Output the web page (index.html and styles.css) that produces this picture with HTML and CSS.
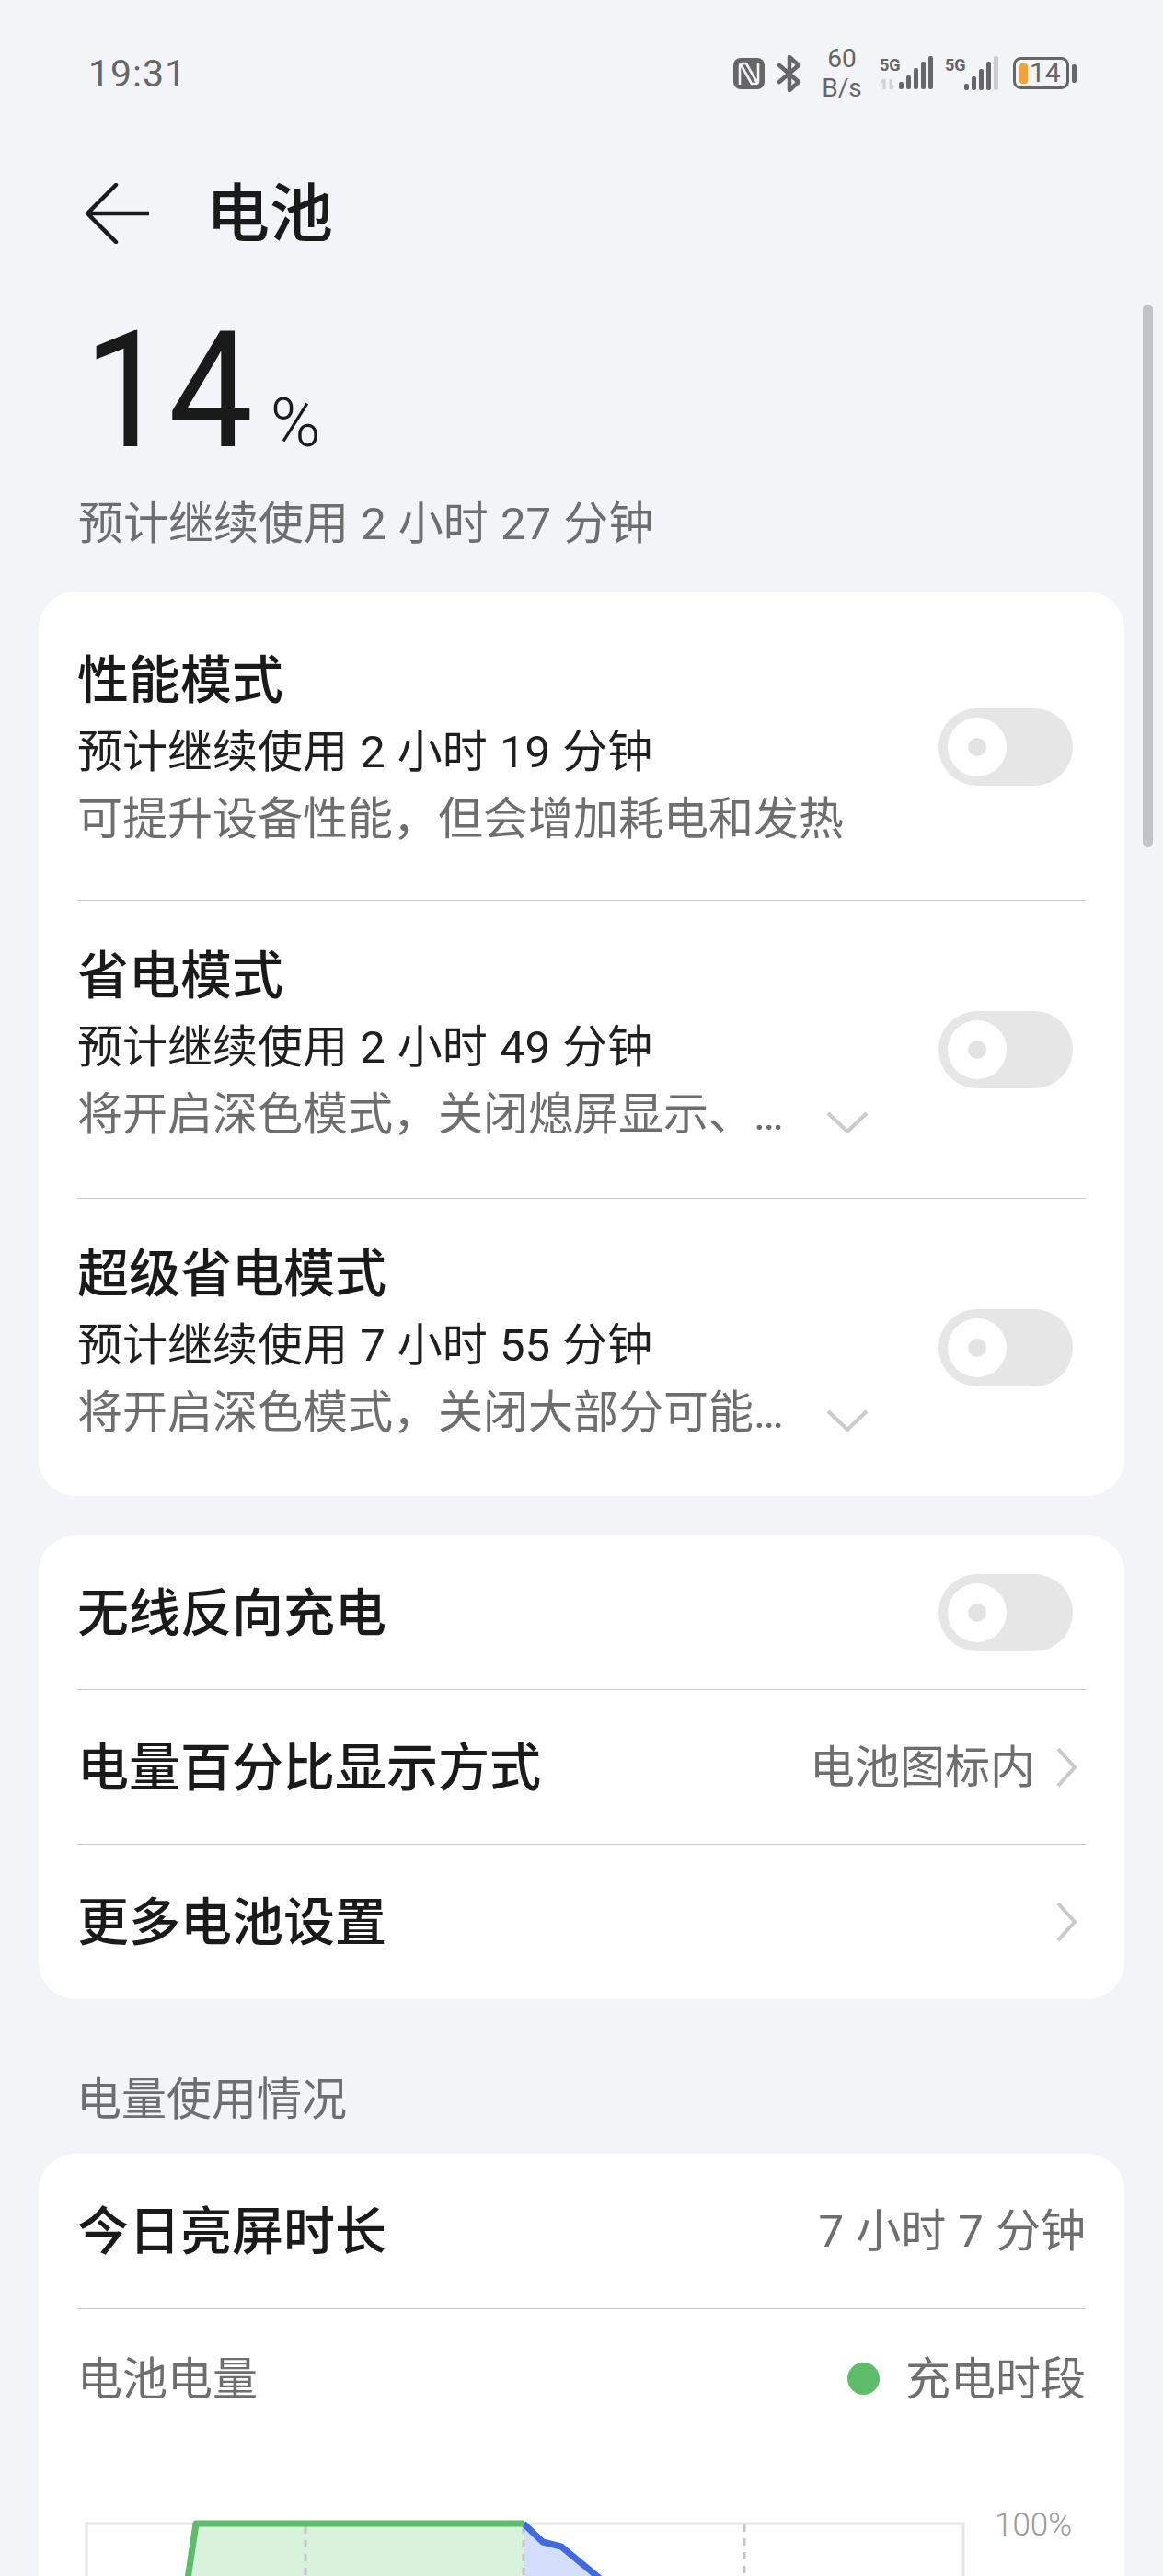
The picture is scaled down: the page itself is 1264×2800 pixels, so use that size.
FILE: index.html
```html
<!DOCTYPE html>
<html lang="zh-CN">
<head>
<meta charset="utf-8">
<title>电池</title>
<link rel="stylesheet" href="styles.css">
</head>
<body>
<div class="page">
  <div class="scrollbar"></div>

  <header class="status">
    <span class="clock">19:31</span>
    <div class="status-icons">
      <svg class="nfc" width="34" height="34" viewBox="0 0 34 34"><rect x="0" y="0" width="34" height="34" rx="8" fill="#666"/><path d="M7 29V9q0-3 3-3h4l12 21M27 5v20q0 3-3 3h-4L8 7" fill="none" stroke="#f2f4f8" stroke-width="2.6" stroke-linejoin="round"/></svg>
      <svg class="bt" width="27" height="40" viewBox="0 0 27 40"><path d="M3 11l21 18-10 9V2l10 9L3 29" fill="none" stroke="#666" stroke-width="4.5" stroke-linejoin="round" stroke-linecap="round"/></svg>
      <div class="speed"><span>60</span><span>B/s</span></div>
      <svg class="sig" width="60" height="40" viewBox="0 0 60 40">
        <text x="0" y="17" class="fiveg">5G</text>
        <path d="M5 37V26M5 26l-3 4M12 26v11M12 37l3-4" fill="none" stroke="#d2d2d2" stroke-width="3"/>
        <rect x="21" y="29" width="5" height="8" rx="2" fill="#666"/>
        <rect x="29" y="22" width="5" height="15" rx="2" fill="#666"/>
        <rect x="37" y="14" width="5" height="23" rx="2" fill="#666"/>
        <rect x="45" y="7" width="5" height="30" rx="2" fill="#666"/>
        <rect x="53" y="1" width="5" height="36" rx="2" fill="#666"/>
      </svg>
      <svg class="sig" width="60" height="40" viewBox="0 0 60 40">
        <text x="0" y="17" class="fiveg">5G</text>
        <rect x="21" y="31" width="5" height="7" rx="2" fill="#666"/>
        <rect x="29" y="23" width="5" height="15" rx="2" fill="#666"/>
        <rect x="37" y="15" width="5" height="23" rx="2" fill="#666"/>
        <rect x="45" y="7" width="5" height="31" rx="2" fill="#666"/>
        <rect x="53" y="1" width="5" height="37" rx="2" fill="#ccc"/>
      </svg>
      <svg class="batt" width="70" height="36" viewBox="0 0 70 36">
        <rect x="1.5" y="1.5" width="58" height="32" rx="7" fill="none" stroke="#666" stroke-width="3"/>
        <rect x="7" y="7" width="9" height="22" rx="3" fill="#f0a33a"/>
        <text x="18" y="27" class="batt-num">14</text>
        <rect x="64" y="8" width="5" height="20" rx="2" fill="#666"/>
      </svg>
    </div>
  </header>

  <nav class="nav">
    <svg class="back" width="70" height="66" viewBox="0 0 70 66"><path d="M34 2L3 33l31 31M3 33h66" fill="none" stroke="#1a1a1a" stroke-width="4.5" stroke-linecap="round" stroke-linejoin="round"/></svg>
    <h1 class="nav-title">电池</h1>
  </nav>

  <section class="summary">
    <div class="level"><span class="level-num">14</span><span class="level-unit">%</span></div>
    <p class="estimate">预计继续使用 2 小时 27 分钟</p>
  </section>

  <section class="card modes">
    <div class="mode mode-first">
      <div class="mode-text">
        <div class="title">性能模式</div>
        <div class="sub">预计继续使用 2 小时 19 分钟</div>
        <div class="desc"><span>可提升设备性能，但会增加耗电和发热</span></div>
      </div>
      <div class="toggle"><i class="knob"></i></div>
    </div>
    <div class="mode">
      <div class="mode-text">
        <div class="title">省电模式</div>
        <div class="sub">预计继续使用 2 小时 49 分钟</div>
        <div class="desc"><span>将开启深色模式，关闭熄屏显示、…</span>
          <svg class="chev-down" width="46" height="24" viewBox="0 0 46 24"><path d="M2 2l21 20L44 2" fill="none" stroke="#cbcbcb" stroke-width="4"/></svg>
        </div>
      </div>
      <div class="toggle toggle-low"><i class="knob"></i></div>
    </div>
    <div class="mode">
      <div class="mode-text">
        <div class="title">超级省电模式</div>
        <div class="sub">预计继续使用 7 小时 55 分钟</div>
        <div class="desc"><span>将开启深色模式，关闭大部分可能…</span>
          <svg class="chev-down" width="46" height="24" viewBox="0 0 46 24"><path d="M2 2l21 20L44 2" fill="none" stroke="#cbcbcb" stroke-width="4"/></svg>
        </div>
      </div>
      <div class="toggle toggle-low"><i class="knob"></i></div>
    </div>
  </section>

  <section class="card settings">
    <div class="row">
      <span class="title">无线反向充电</span>
      <div class="toggle"><i class="knob"></i></div>
    </div>
    <div class="row">
      <span class="title">电量百分比显示方式</span>
      <div class="row-end">
        <span class="value">电池图标内</span>
        <svg class="chev" width="24" height="44" viewBox="0 0 24 44"><path d="M3 2l18 20L3 42" fill="none" stroke="#c9c9c9" stroke-width="4"/></svg>
      </div>
    </div>
    <div class="row">
      <span class="title">更多电池设置</span>
      <svg class="chev" width="24" height="44" viewBox="0 0 24 44"><path d="M3 2l18 20L3 42" fill="none" stroke="#c9c9c9" stroke-width="4"/></svg>
    </div>
  </section>

  <h2 class="section-label">电量使用情况</h2>

  <section class="card usage">
    <div class="usage-head">
      <span class="title">今日亮屏时长</span>
      <span class="value">7 小时 7 分钟</span>
    </div>
    <div class="legend">
      <span class="value">电池电量</span>
      <span class="legend-key"><i class="dot"></i><span class="value">充电时段</span></span>
    </div>
    <div class="chart">
      <svg class="plot" width="966" height="80" viewBox="0 0 966 80">
        <path d="M120 80L130 13H486V80Z" fill="#d9f2dc"/>
        <path d="M486 13L507 32L527 37L579 80H486Z" fill="#d3dffa"/>
        <path d="M11 80V13H964V80" fill="none" stroke="#e5e5e5" stroke-width="3"/>
        <path d="M249 16V80M486 16V80M726 14V80" stroke="#c4c4c4" stroke-width="3" stroke-dasharray="8 7"/>
        <path d="M486 13L507 33L527 38L579 81" fill="none" stroke="#3f6ae0" stroke-width="7"/>
        <path d="M120 80L130 13H486" fill="none" stroke="#5dbd6a" stroke-width="7" stroke-linejoin="round"/>
      </svg>
      <span class="tick">100%</span>
    </div>
  </section>
</div>
</body>
</html>
```
FILE: styles.css
```css
* { box-sizing: border-box; }
html, body { margin: 0; padding: 0; }
body {
  background: #f2f4f8;
  font-family: Roboto, "Noto Sans CJK SC", sans-serif;
  color: #1a1a1a;
}
.page {
  position: relative;
  width: 1264px;
  height: 2800px;
  overflow: hidden;
}
.scrollbar {
  position: absolute;
  left: 1242px;
  top: 331px;
  width: 11px;
  height: 590px;
  border-radius: 6px;
  background: #c2c3c8;
}

/* status bar */
.status {
  height: 160px;
  display: flex;
  align-items: center;
  justify-content: space-between;
  padding: 0 93px 0 96px;
}
.clock { font-size: 41px; color: #666; letter-spacing: 1px; }
.status-icons { display: flex; align-items: center; }
.nfc { margin-right: 13px; }
.bt { margin-right: 23px; }
.speed {
  display: flex;
  flex-direction: column;
  align-items: center;
  width: 42px;
  margin-right: 20px;
  font-size: 28px;
  line-height: 32px;
  color: #666;
}
.sig { margin-right: 11px; overflow: visible; }
.sig + .sig { margin-right: 14px; }
.fiveg { font: 700 18px Roboto, sans-serif; fill: #666; }
.batt-num { font: 400 30px Roboto, sans-serif; fill: #666; }

/* nav */
.nav {
  height: 106px;
  margin-top: 19px;
  display: flex;
  align-items: center;
  padding-left: 92px;
}
.back { margin-right: 62px; }
.nav-title { margin: 4px 0 0; font-size: 69px; font-weight: 500; line-height: 90px; }

/* summary */
.summary { padding-left: 85px; height: 358px; }
.level { height: 250px; padding-top: 30px; display: flex; align-items: baseline; }
.level-num {
  display: block;
  margin-left: 6px;
  font-size: 176px;
  line-height: 220px;
  color: #1a1a1a;
  transform: scaleX(0.93);
  transform-origin: left center;
}
.level-unit { font-size: 74px; font-weight: 300; margin-left: 5px; color: #1a1a1a; }
.estimate { margin: 0; padding-top: 2px; font-size: 49px; line-height: 66px; word-spacing: 1px; color: #6e6e6e; }

/* cards */
.card {
  margin: 0 42px;
  padding: 0 42px;
  background: #fff;
  border-radius: 40px;
}
.title { display: block; padding-top: 2px; font-size: 56px; font-weight: 500; line-height: 76px; color: #1a1a1a; }
.value { display: block; padding-top: 2px; font-size: 49px; color: #6e6e6e; line-height: 66px; word-spacing: 1px; }

.modes { height: 983px; padding-top: 15px; }
.mode {
  display: flex;
  align-items: center;
  justify-content: space-between;
  padding: 42px 14px 57px 0;
  border-bottom: 1px solid #c9c9c9;
}
.mode:last-child { border-bottom: 0; }
.mode-first { padding-bottom: 54px; }
.mode-text { width: 900px; }
.sub { padding-top: 2px; font-size: 49px; line-height: 76px; word-spacing: 1px; color: #1f1f1f; white-space: nowrap; }
.desc {
  display: flex;
  align-items: center;
  padding-top: 2px;
  font-size: 49px;
  line-height: 66px;
  color: #6e6e6e;
  white-space: nowrap;
}
.desc span { display: block; }
.chev-down { margin-left: 46px; margin-top: 16px; }

.toggle {
  flex: none;
  width: 146px;
  height: 84px;
  border-radius: 42px;
  background: #e6e6e6;
  display: flex;
  align-items: center;
  padding-left: 10px;
}
.toggle-low { margin-top: 16px; }
.knob {
  width: 64px;
  height: 64px;
  border-radius: 50%;
  background: #fff;
  display: flex;
  align-items: center;
  justify-content: center;
}
.knob::after {
  content: "";
  width: 20px;
  height: 20px;
  border-radius: 50%;
  background: #e3e3e3;
}

.settings { margin-top: 43px; }
.row {
  height: 168px;
  display: flex;
  align-items: center;
  justify-content: space-between;
  border-bottom: 1px solid #c9c9c9;
}
.row:last-child { border-bottom: 0; }
.row:first-child .toggle { margin-right: 14px; }
.row-end { display: flex; align-items: center; }
.row-end .value { margin-right: 22px; }
.chev { margin-right: 9px; }

.section-label {
  margin: 0;
  padding: 41px 0 0 83px;
  height: 168px;
  display: flex;
  align-items: center;
  font-size: 49px;
  font-weight: 400;
  color: #6e6e6e;
}

.usage { height: 600px; }
.usage-head {
  height: 169px;
  display: flex;
  align-items: center;
  justify-content: space-between;
  border-bottom: 1px solid #c9c9c9;
}
.legend {
  height: 151px;
  display: flex;
  align-items: center;
  justify-content: space-between;
}
.legend-key { display: flex; align-items: center; }
.dot {
  width: 35px;
  height: 35px;
  border-radius: 50%;
  background: #5dbd6a;
  margin-right: 28px;
}
.chart { display: flex; align-items: flex-start; margin-left: -1px; margin-top: 63px; }
.plot { margin-top: 6px; }
.tick {
  margin-left: 32px;
  font-size: 35px;
  font-weight: 300;
  line-height: 42px;
  color: #9a9a9a;
}
```
